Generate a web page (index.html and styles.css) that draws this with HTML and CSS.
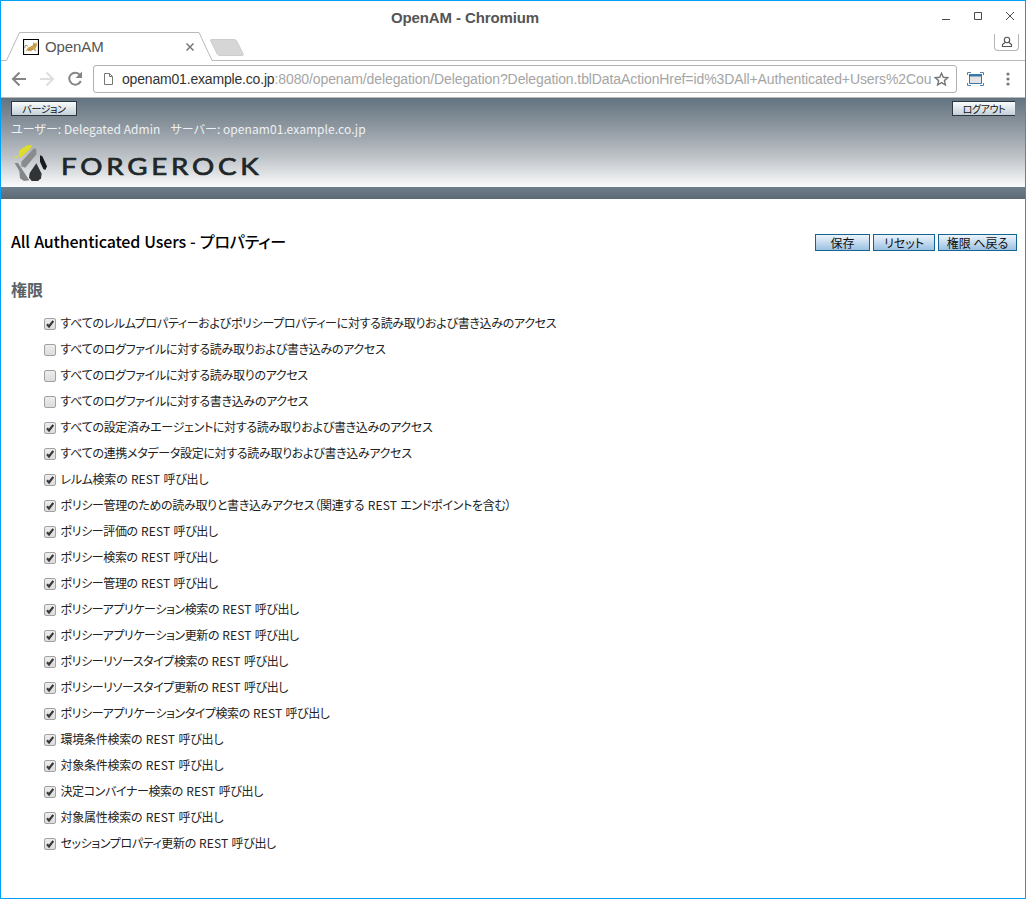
FILE: index.html
```html
<!DOCTYPE html>
<html lang="ja">
<head>
<meta charset="utf-8">
<title>OpenAM</title>
<link rel="stylesheet" href="styles.css">
</head>
<body>
<div class="window">
  <header class="titlebar">
    <span class="window-title">OpenAM - Chromium</span>
    <svg class="window-controls" width="72" height="14" viewBox="0 0 72 14" fill="none" stroke="#4a4a4a">
      <path d="M0 12.500H8M32.500 5.500h7v7h-7z"/>
      <path d="M64 5l8 8M72 5l-8 8"/>
    </svg>
  </header>
  <div class="tabstrip">
    <svg class="tab-shape" width="1024" height="30" viewBox="0 0 1024 30" fill="none">
      <path d="M0 29.500H5.500L18.500 1.500H198L211 29.500H1024" stroke="#b9b9b9"/>
      <path d="M210 8.500H233q2 0 3 2l6 12q1 2-1 2H219q-2 0-3-2l-6-12q-1-2 0-2z" fill="#d6d6d6" stroke="#cdcdcd"/>
    </svg>
    <div class="tab">
      <svg class="favicon" width="16" height="16" viewBox="0 0 16 16">
        <path d="M.5.5h15v15H.5z" fill="#fff" stroke="#000" stroke-width="1.200"/>
        <path d="M2.500 12.500l2.500-4 3.500-1.500 1.500-1 0-3 1.300 1.300h1.400l1.200-1-.4 4.500-1.300 1 1 3.500H12l-1.500-2-2 1 .5 1H6.500l-1.500-1-1 .8z" fill="#cfa34c"/>
        <path d="M2 9q-.5-2 1-3l2 1.500M10.500 6h1M13 6h.8M8 10l2 .5M5 11.500l2-1.500M12 8h1" stroke="#7b7265" stroke-width=".8" fill="none"/>
      </svg>
      <span class="tab-title">OpenAM</span>
      <svg class="tab-close" width="8" height="8" viewBox="0 0 8 8" stroke="#777" stroke-width="1.500"><path d="M.5.5l7 7M7.500.5l-7 7"/></svg>
    </div>
    <div class="profile">
      <svg width="12" height="12" viewBox="0 0 12 12" fill="none" stroke="#555" stroke-width="1.100"><circle cx="6" cy="4" r="2.700"/><path d="M4 6.500L1.500 8.500V10.500H10.500V8.500L8 6.500"/></svg>
    </div>
  </div>
  <div class="toolbar">
    <svg class="nav-icons" width="74" height="18" viewBox="0 0 74 18" fill="none" stroke-width="2">
      <path d="M15 9H2M8.500 2.500L2 9l6.500 6.500" stroke="#858585"/>
      <path d="M29 9H42M35.500 2.500L42 9l-6.500 6.500" stroke="#dedede"/>
      <path d="M69 5A6 6 0 1 0 69.800 11" stroke="#858585"/>
      <path d="M71 1.500V8H64.500z" fill="#858585"/>
    </svg>
    <div class="urlbar">
      <svg width="9" height="12" viewBox="0 0 9 12" fill="none" stroke="#777"><path d="M.5.5h5l3 3v8h-8zM5.500.5v3h3"/></svg>
      <span class="url"><span class="host">openam01.example.co.jp</span>:8080/openam/delegation/Delegation?Delegation.tblDataActionHref=id%3DAll+Authenticated+Users%2Cou</span>
      <svg class="star" width="15" height="14" viewBox="0 0 15 14" fill="none" stroke="#777" stroke-width="1.400"><path d="M7.500 1.300L9.300 5.300 13.700 5.700 10.400 8.600 11.400 12.900 7.500 10.600 3.600 12.900 4.600 8.600 1.300 5.700 5.700 5.300z"/></svg>
    </div>
    <svg class="ext" width="17" height="16" viewBox="0 0 17 16" fill="none">
      <path d="M2.500 3.500h12v9h-12z" fill="#e4e4e4" stroke="#3977ad"/><path d="M2 3h13v2.500H2z" fill="#3977ad"/>
      <path d="M.5 4V1.500H4M13 1.500h3.500V4M.5 12v2.500H4M13 14.500h3.500V12" stroke="#4a84b6"/>
    </svg>
    <svg class="menu" width="4" height="14" viewBox="0 0 4 14" fill="#777"><circle cx="2" cy="2" r="1.600"/><circle cx="2" cy="7" r="1.600"/><circle cx="2" cy="12" r="1.600"/></svg>
  </div>

  <div class="masthead">
    <div class="masthead-row">
      <button class="mast-btn version">バージョン</button>
      <button class="mast-btn logout">ログアウト</button>
    </div>
    <div class="status"><span class="user">ユーザー: Delegated Admin</span><span class="server">サーバー: openam01.example.co.jp</span></div>
    <svg class="logo" width="250" height="38" viewBox="0 0 250 38">
      <g transform="translate(-4 -2) scale(.33333)">
        <path d="M18 51L23 43 29 50zM32 45L34 28 58 13 73 12 66 24 38 50z" fill="#dedd2a"/>
        <path d="M40 62L78 22 85 24 85 40 52 80 40 76z" fill="#8a8b8c"/>
        <path d="M20 66L30 66 64 118 48 120 36 112 34 90z" fill="#858687"/>
        <path d="M96 43L103 46 117 76 112 87 106 84 96 62z" fill="#171b1d"/>
        <path d="M85 67L101 98 99 112 89 121H72L63 110 65 96z" fill="#303437"/>
      </g>
      <text transform="translate(49 31.800) scale(1.180 1)" class="wordmark" textLength="167.500" lengthAdjust="spacing">FORGEROCK</text>
    </svg>
  </div>
  <div class="mast-bar"></div>

  <main class="content">
    <div class="title-row">
      <h1>All Authenticated Users - プロパティー</h1>
      <div class="actions">
        <button class="action save">保存</button>
        <button class="action reset">リセット</button>
        <button class="action back">権限 へ戻る</button>
      </div>
    </div>
    <h2>権限</h2>
    <div class="privileges">
      <label class="row"><input type="checkbox" checked><span>すべてのレルムプロパティーおよびポリシープロパティーに対する読み取りおよび書き込みのアクセス</span></label>
      <label class="row"><input type="checkbox"><span>すべてのログファイルに対する読み取りおよび書き込みのアクセス</span></label>
      <label class="row"><input type="checkbox"><span>すべてのログファイルに対する読み取りのアクセス</span></label>
      <label class="row"><input type="checkbox"><span>すべてのログファイルに対する書き込みのアクセス</span></label>
      <label class="row"><input type="checkbox" checked><span>すべての設定済みエージェントに対する読み取りおよび書き込みのアクセス</span></label>
      <label class="row"><input type="checkbox" checked><span>すべての連携メタデータ設定に対する読み取りおよび書き込みアクセス</span></label>
      <label class="row loose"><input type="checkbox" checked><span>レルム検索の <i>REST</i> 呼び出し</span></label>
      <label class="row"><input type="checkbox" checked><span>ポリシー管理のための読み取りと書き込みアクセス（関連する <i>REST</i> エンドポイントを含む）</span></label>
      <label class="row snug"><input type="checkbox" checked><span>ポリシー評価の <i>REST</i> 呼び出し</span></label>
      <label class="row snug"><input type="checkbox" checked><span>ポリシー検索の <i>REST</i> 呼び出し</span></label>
      <label class="row snug"><input type="checkbox" checked><span>ポリシー管理の <i>REST</i> 呼び出し</span></label>
      <label class="row tight"><input type="checkbox" checked><span>ポリシーアプリケーション検索の <i>REST</i> 呼び出し</span></label>
      <label class="row tight"><input type="checkbox" checked><span>ポリシーアプリケーション更新の <i>REST</i> 呼び出し</span></label>
      <label class="row tight"><input type="checkbox" checked><span>ポリシーリソースタイプ検索の <i>REST</i> 呼び出し</span></label>
      <label class="row tight"><input type="checkbox" checked><span>ポリシーリソースタイプ更新の <i>REST</i> 呼び出し</span></label>
      <label class="row tight"><input type="checkbox" checked><span>ポリシーアプリケーションタイプ検索の <i>REST</i> 呼び出し</span></label>
      <label class="row loose"><input type="checkbox" checked><span>環境条件検索の <i>REST</i> 呼び出し</span></label>
      <label class="row loose"><input type="checkbox" checked><span>対象条件検索の <i>REST</i> 呼び出し</span></label>
      <label class="row snug"><input type="checkbox" checked><span>決定コンバイナー検索の <i>REST</i> 呼び出し</span></label>
      <label class="row loose"><input type="checkbox" checked><span>対象属性検索の <i>REST</i> 呼び出し</span></label>
      <label class="row snug"><input type="checkbox" checked><span>セッションプロパティ更新の <i>REST</i> 呼び出し</span></label>
    </div>
  </main>
</div>
</body>
</html>
```
FILE: styles.css
```css
* { box-sizing: border-box; }
body { margin: 0; background: #fff; font-family: "Noto Sans CJK JP", sans-serif; font-feature-settings: "palt"; }
button { font: inherit; font-feature-settings: inherit; margin: 0; padding: 0; border-radius: 0; color: #111; }
svg { display: block; flex: none; }
.window { width: 1026px; height: 899px; border: 1px solid #00a2f8; overflow: hidden; display: flex; flex-direction: column; }
.titlebar { height: 30px; flex: none; display: flex; justify-content: space-between; padding: 0 11px 0 390px; font-family: "Liberation Sans", sans-serif; }
.window-title { font-size: 15px; font-weight: bold; color: #555; line-height: 34px; white-space: nowrap; letter-spacing: -0.12px; }
.window-controls { margin-top: 6px; }
.tabstrip { height: 30px; flex: none; position: relative; display: flex; justify-content: space-between; align-items: flex-start; }
.tab-shape { position: absolute; left: 0; top: 0; }
.tab { position: relative; width: 171px; margin-left: 22px; height: 30px; display: flex; align-items: center; padding-top: 1px; }
.tab-title { flex: 1; margin-left: 6px; font: 15px "Liberation Sans", sans-serif; color: #555; letter-spacing: -0.1px; }
.profile { position: relative; width: 25px; height: 17px; margin: 3px 6px 0 0; border: 1px solid #b5b5b5; border-top: 0; border-radius: 0 0 4px 4px; display: flex; justify-content: center; padding-top: 2px; }
.toolbar { height: 37px; flex: none; padding: 4px 15px 4px 10px; display: flex; align-items: center; border-bottom: 1px solid #b8b8b8; }
.urlbar { width: 864px; height: 28px; margin-left: 8px; border: 1px solid #b0b0b0; border-radius: 3px; display: flex; align-items: center; padding: 0 7px 0 10px; }
.url { margin-left: 9px; width: 812px; white-space: nowrap; font: 14px "Liberation Sans", sans-serif; letter-spacing: -0.1px; color: #a5a5a5; }
.host { color: #333; letter-spacing: -0.18px; }
.ext { margin-left: 9.500px; }
.menu { margin-left: auto; }
.masthead { height: 89px; flex: none; background: linear-gradient(#637380, #8a949d 30%, #bcc1c6 65%, #fafbfc); }
.masthead-row { display: flex; justify-content: space-between; padding: 3px 10px 0; }
.mast-btn { height: 15px; font-size: 10px; line-height: 13px; border: 1px solid #2c363c; background: linear-gradient(#f9fcfd, #c3d0d8); }
.version { width: 66px; letter-spacing: -0.4px; }
.logout { width: 63px; border-right: 0; letter-spacing: -0.4px; }
.status { height: 25px; padding: 0 0 1px 10px; display: flex; gap: 10px; align-items: center; font-size: 12px; letter-spacing: 0.06px; color: #edf1f3; white-space: nowrap; }
.logo { margin: 2px 0 0 11px; }
.wordmark { font: 400 23.500px Lato, sans-serif; fill: #202729; stroke: #202729; stroke-width: 0.700px; font-feature-settings: normal; }
.mast-bar { height: 12px; flex: none; background: linear-gradient(#6e7e8c, #5c6a73); }
.content { padding: 31px 8px 0 10px; }
.title-row { display: flex; justify-content: space-between; align-items: center; height: 24px; }
h1 { margin: -2px 0 0; font-size: 16px; font-weight: 500; line-height: 24px; letter-spacing: -0.18px; word-spacing: 0.8px; color: #000; white-space: nowrap; }
.actions { display: flex; gap: 3px; }
.action { height: 17px; font-size: 12px; line-height: 15px; border: 1px solid #166491; background: linear-gradient(#edf4fb, #9bc1e2); white-space: nowrap; }
.save { width: 55px; }
.reset { width: 62px; }
.back { width: 79px; }
h2 { margin: 23px 0 9px; font-size: 16px; font-weight: 700; line-height: 24px; color: #5a6266; }
.privileges { padding-left: 33px; }
.row { display: flex; align-items: center; height: 26px; font-size: 12px; letter-spacing: -0.31px; word-spacing: 1px; color: #222; white-space: nowrap; }
.row.loose { letter-spacing: -0.24px; }
.row.snug { letter-spacing: -0.38px; }
.row.tight { letter-spacing: -0.43px; }
.row span { margin-top: -1px; }
.row i { font-style: normal; letter-spacing: 0.1px; }
.row input { appearance: none; width: 12px; height: 12px; margin: 1px 4.500px 0 0; border: 1px solid #a2a2a2; border-radius: 2px; background: linear-gradient(#ededed, #dcdcdc); }
.row input:checked { background: url("data:image/svg+xml,%3Csvg xmlns='http://www.w3.org/2000/svg' viewBox='0 0 10 10'%3E%3Cpath d='M2 5.300l2 2.200L8.300 1.800' fill='none' stroke='%23393939' stroke-width='2.200'/%3E%3C/svg%3E") center / 10px, linear-gradient(#ededed, #dcdcdc); }
```
